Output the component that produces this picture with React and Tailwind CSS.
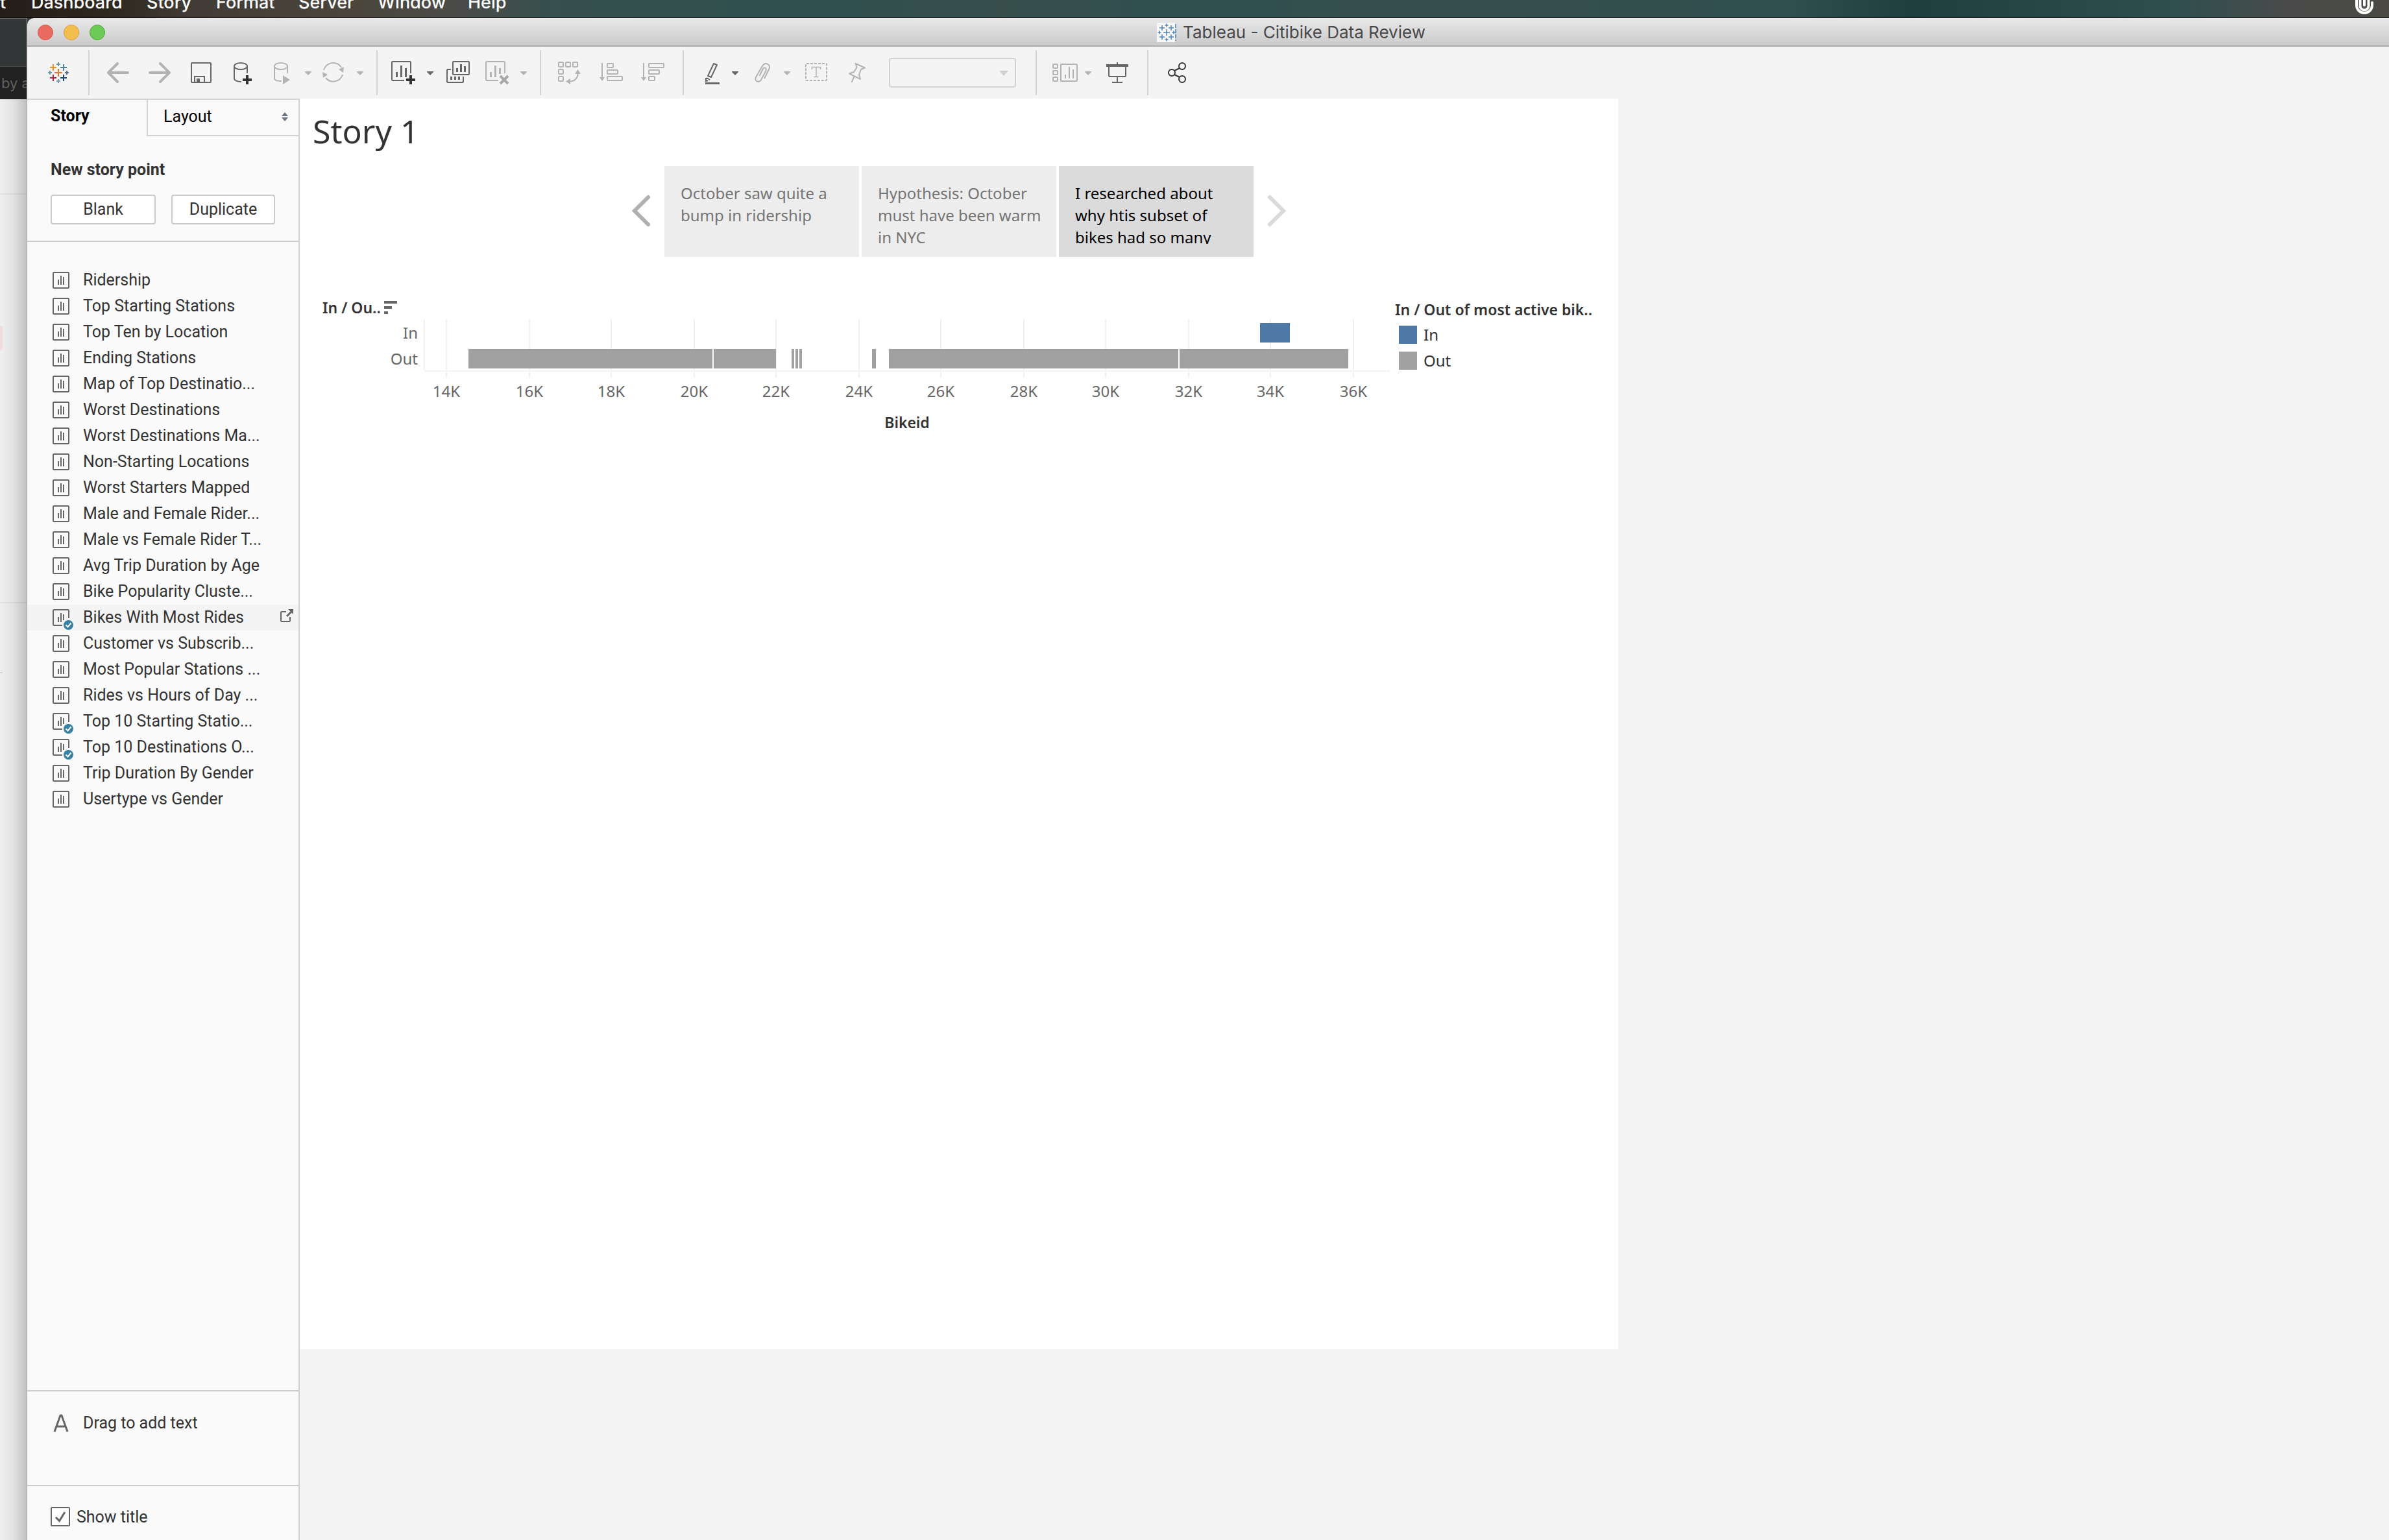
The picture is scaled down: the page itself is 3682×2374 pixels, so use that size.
import React from "react";

const menus = [
  ["Dashboard", "w-[178px]"],
  ["Story", "w-[107px]"],
  ["Format", "w-[127px]"],
  ["Server", "w-[122px]"],
  ["Window", "w-[139px]"],
  ["Help", "w-[80px]"],
];

const sheets = [
  ["Ridership"],
  ["Top Starting Stations"],
  ["Top Ten by Location"],
  ["Ending Stations"],
  ["Map of Top Destinatio..."],
  ["Worst Destinations"],
  ["Worst Destinations Ma..."],
  ["Non-Starting Locations"],
  ["Worst Starters Mapped"],
  ["Male and Female Rider..."],
  ["Male vs Female Rider T..."],
  ["Avg Trip Duration by Age"],
  ["Bike Popularity Cluste..."],
  ["Bikes With Most Rides", true, true],
  ["Customer vs Subscrib..."],
  ["Most Popular Stations ..."],
  ["Rides vs Hours of Day ..."],
  ["Top 10 Starting Statio...", true],
  ["Top 10 Destinations O...", true],
  ["Trip Duration By Gender"],
  ["Usertype vs Gender"],
];

const storyPoints = [
  { text: "October saw quite a bump in ridership" },
  { text: "Hypothesis: October must have been warm in NYC" },
  { text: "I researched about why htis subset of bikes had so many", active: true },
];

const ticks = [
  ["14K", 688], ["16K", 816], ["18K", 942], ["20K", 1070], ["22K", 1196], ["24K", 1324],
  ["26K", 1450], ["28K", 1578], ["30K", 1704], ["32K", 1832], ["34K", 1958], ["36K", 2086],
];

const outBars = [
  [722, 376], [1100, 96], [1220, 4], [1226, 4], [1232, 4], [1344, 6], [1370, 446], [1818, 260],
];

const DARK = "#666";
const LIGHT = "#b3b3b3";

/* Every toolbar drawing shares one coordinate space; x is the left edge of its window. */
function Tool({ label, x, w, className, color = DARK, children }) {
  return (
    <button type="button" aria-label={label} className={`shrink-0 ${className}`}>
      <svg width={w} height="40" viewBox={`${x} 92 ${w} 40`} fill="none" stroke={color} strokeWidth="2" className="block">
        {children}
      </svg>
    </button>
  );
}

function Caret({ label, className, color = LIGHT }) {
  return (
    <button type="button" aria-label={label} className={`shrink-0 ${className}`}>
      <svg width="10" height="40" viewBox="0 0 10 40" className="block">
        <path d="M0 18H10V19L5 24L0 19Z" fill={color} />
      </svg>
    </button>
  );
}

function Separator({ className }) {
  return <div className={`h-[70px] w-0.5 shrink-0 bg-[#d4d4d4] ${className}`} />;
}

const plus = (cx, cy, r) => `M${cx - r} ${cy}H${cx + r}M${cx} ${cy - r}V${cy + r}`;

function SheetIcon({ used }) {
  return (
    <svg width="26" height="26" viewBox="0 0 26 26" fill="none" stroke={DARK} strokeWidth="2" className="block shrink-0 overflow-visible">
      {used ? <path d="M15 25H2L1 24V2L2 1H24L25 2V14" /> : <rect x="1" y="1" width="24" height="24" rx="1" />}
      <path d="M9 12V20M13 6V20" />
      <path d={used ? "M17 8V17" : "M17 8V20"} />
      {used && (
        <>
          <circle cx="24.5" cy="24.5" r="7.5" fill="#3580a0" stroke="none" />
          <path d="M20.5 24.5L23.5 27.5L28.5 21.5" stroke="#fff" />
        </>
      )}
    </svg>
  );
}

function Toolbar() {
  return (
    <div className="flex h-20 items-center bg-[#f4f4f4]">
      <Tool label="Start page" x={74} w={32} className="ml-8">
        <path d={plus(90, 112, 6)} stroke="#e8762c" />
        <path d={plus(82, 104, 5)} stroke="#eb912b" />
        <path d={plus(98, 104, 5)} stroke="#50829a" />
        <path d={plus(82, 120, 5)} stroke="#c8203a" />
        <path d={plus(98, 120, 5)} stroke="#1f457e" />
        <path d={plus(90, 99, 3) + plus(77, 112, 3)} stroke="#7199a6" />
        <path d={plus(103, 112, 3)} stroke="#5c6692" />
        <path d={plus(90, 125, 3)} stroke="#8a94b8" />
      </Tool>
      <Separator className="ml-[30px]" />
      <Tool label="Back" x={165} w={34} className="ml-[27px]" color={LIGHT}>
        <path d="M197 112H167M181 98L167 112L181 126" strokeWidth="4" strokeLinecap="round" strokeLinejoin="round" />
      </Tool>
      <Tool label="Forward" x={229} w={34} className="ml-[30px]" color={LIGHT}>
        <path d="M231 112H261M247 98L261 112L247 126" strokeWidth="4" strokeLinecap="round" strokeLinejoin="round" />
      </Tool>
      <Tool label="Save" x={294} w={32} className="ml-[31px]">
        <rect x="295" y="97" width="30" height="30" rx="1" />
        <path d="M300 127V118H315V127" />
        <path d="M303 121H308V127H303Z" fill={DARK} stroke="none" />
      </Tool>
      <Tool label="New data source" x={358} w={32} className="ml-8">
        <ellipse cx="371" cy="102" rx="10" ry="5" />
        <path d="M361 102V121C361 124 366 126 372 126M381 102V113" />
        <path d={plus(381, 123, 7)} stroke="#333" strokeWidth="4" />
      </Tool>
      <Tool label="Pause auto updates" x={420} w={32} className="ml-[30px]" color={LIGHT}>
        <ellipse cx="433" cy="102" rx="10" ry="5" />
        <path d="M423 102V121C423 124 428 125 434 125M443 102V113" />
        <path d="M436 116L447 123L436 130Z" fill={LIGHT} stroke="none" />
      </Tool>
      <Caret label="Auto update options" className="ml-[18px]" />
      <Tool label="Run update" x={496} w={36} className="ml-4" color={LIGHT}>
        <path d="M499 108A15 15 0 0 1 526 104M528 115A15 15 0 0 1 502 120" />
        <path d="M530 103L529 112L522 107ZM497 111L505 115L498 120Z" fill={LIGHT} stroke="none" />
      </Tool>
      <Caret label="Update options" className="ml-[18px]" />
      <Separator className="ml-5" />
      <Tool label="New worksheet" x={602} w={40} className="ml-5">
        <path d="M623 124H605L604 123V96L605 95H632L633 96V113" />
        <path d="M611.5 111V119M618.5 101V119M625.5 105V119" strokeWidth="3" />
        <path d={plus(633, 123, 7)} stroke="#333" strokeWidth="4" />
      </Tool>
      <Caret label="New worksheet options" className="ml-4" color={DARK} />
      <Tool label="Duplicate" x={686} w={40} className="ml-[18px]">
        <rect x="698" y="95" width="25" height="20" rx="1" />
        <path d="M695 107H690L689 108V126L690 127H713L714 126V118" />
        <path d="M704.5 105V111M710.5 99V111M716.5 102V111M695.5 118V123M701.5 118V123M707.5 118V123" strokeWidth="3" />
      </Tool>
      <Tool label="Clear sheet" x={746} w={40} className="ml-5" color={LIGHT}>
        <path d="M768 124H750L749 123V96L750 95H777L778 96V113" />
        <path d="M756.5 111V119M763.5 101V119M770.5 105V114" strokeWidth="3" />
        <path d="M771 117L783 129M783 117L771 129" strokeWidth="4" stroke="#a8a8a8" />
      </Tool>
      <Caret label="Clear options" className="ml-4" />
      <Separator className="ml-5" />
      <Tool label="Swap rows and columns" x={858} w={40} className="ml-6" color={LIGHT}>
        <rect x="861" y="96" width="7" height="7" rx="1" />
        <rect x="872" y="96" width="7" height="7" rx="1" />
        <rect x="883" y="96" width="7" height="7" rx="1" />
        <rect x="861" y="107" width="7" height="7" rx="1" />
        <rect x="861" y="118" width="7" height="7" rx="1" />
        <path d="M878 125.500C886 125 891 120 890.500 113" />
        <path d="M890.500 107L886 114H895ZM872 125.500L879 121V130Z" fill={LIGHT} stroke="none" />
      </Tool>
      <Tool label="Sort ascending" x={922} w={40} className="ml-6" color={LIGHT}>
        <path d="M928 97V120" />
        <path d="M924 119H932L928 125Z" fill={LIGHT} stroke="none" />
        <rect x="936" y="98" width="9" height="6" rx="1" />
        <rect x="936" y="108" width="16" height="6" rx="1" />
        <rect x="936" y="118" width="23" height="6" rx="1" />
      </Tool>
      <Tool label="Sort descending" x={986} w={40} className="ml-6" color={LIGHT}>
        <path d="M992 97V120" />
        <path d="M988 119H996L992 125Z" fill={LIGHT} stroke="none" />
        <rect x="1000" y="98" width="23" height="6" rx="1" />
        <rect x="1000" y="108" width="16" height="6" rx="1" />
        <rect x="1000" y="118" width="9" height="6" rx="1" />
      </Tool>
      <Separator className="ml-[26px]" />
      <Tool label="Highlight" x={1084} w={28} className="ml-[30px]">
        <path d="M1100 98L1105 100L1096 119L1091 117Z" strokeLinejoin="round" />
        <path d="M1089 120L1094 123M1088 123L1091 125M1088 120V126" />
        <path d="M1087 128.500H1109" strokeWidth="3" />
      </Tool>
      <Caret label="Highlight options" className="ml-4" color={DARK} />
      <Tool label="Group members" x={1162} w={28} className="ml-6" color={LIGHT}>
        <path d="M1178 121L1185.500 106C1188 99 1179 95 1175.500 101L1165 119C1162 126 1170 128 1173 123L1180.500 109C1182 104 1177 103 1175.500 107L1170.500 117" />
      </Tool>
      <Caret label="Group options" className="ml-[18px]" />
      <Tool label="Show mark labels" x={1240} w={36} className="ml-[22px]" color={LIGHT}>
        <rect x="1242" y="98" width="32" height="26" rx="1" strokeDasharray="4 2" />
        <path d="M1251.500 107V103.500H1264.500V107M1258 104V118M1254.500 118.500H1261.500" strokeWidth="1.500" />
      </Tool>
      <Tool label="Fix axes" x={1306} w={30} className="ml-[30px]" color={LIGHT}>
        <path d="M1318.500 98L1333 104.500L1327 107L1324 115L1326 122L1309 113.500L1316 111L1320.500 104ZM1316.500 118L1312.500 127" strokeLinejoin="round" />
      </Tool>
      <div className="relative ml-[34px] shrink-0">
        <select aria-label="Fit" defaultValue="" className="block h-[46px] w-[196px] appearance-none rounded-sm border-2 border-[#d2d2d2] bg-[#f4f4f4]">
          <option value=""></option>
        </select>
        <svg width="14" height="8" viewBox="0 0 14 8" className="pointer-events-none absolute top-5 right-3">
          <path d="M0 0H14L7 8Z" fill="#d0d0d0" />
        </svg>
      </div>
      <Separator className="ml-[30px]" />
      <Tool label="Show or hide cards" x={1620} w={42} className="ml-[22px]" color={LIGHT}>
        <rect x="1623" y="99" width="7" height="6" rx="1" />
        <rect x="1623" y="109" width="7" height="6" rx="1" />
        <rect x="1623" y="119" width="7" height="6" rx="1" />
        <rect x="1635" y="99" width="25" height="26" rx="1" />
        <path d="M1642 115V121M1648 103V121M1654 107V121" />
      </Tool>
      <Caret label="Card options" className="ml-2.5" />
      <Tool label="Presentation mode" x={1704} w={36} className="ml-[22px]">
        <path d="M1705 99H1739V103H1705Z" fill={DARK} stroke="none" />
        <path d="M1722 96V99M1709 103V117L1710 118H1734L1735 117V103M1722 118V127M1714 127H1730" />
      </Tool>
      <Separator className="ml-7" />
      <Tool label="Share" x={1798} w={32} className="ml-7" color="#333">
        <circle cx="1822" cy="102" r="5" />
        <circle cx="1806" cy="112" r="5" />
        <circle cx="1822" cy="122" r="5" />
        <path d="M1810 109L1818 105M1810 115L1818 119" />
      </Tool>
    </div>
  );
}

function Sidebar() {
  return (
    <aside className="flex w-[420px] shrink-0 flex-col border-t-2 border-r-2 border-[#d2d2d2] bg-[#fafafa] font-['Roboto',sans-serif] text-[25px] leading-[30px] text-[#333]">
      <div role="tablist" className="flex h-14 text-black">
        <button type="button" role="tab" aria-selected="true" className="w-[184px] pb-1.5 pl-9 text-left font-bold">
          Story
        </button>
        <button type="button" role="tab" aria-selected="false" className="flex flex-1 items-center justify-between border-b-2 border-l-2 border-[#d2d2d2] pr-4 pb-0.5 pl-6 text-left">
          Layout
          <svg width="10" height="14" viewBox="0 0 10 14" fill="#687484">
            <path d="M5 0L10 6H0ZM5 14L10 8H0Z" />
          </svg>
        </button>
      </div>
      <section className="border-b-2 border-[#ccc] px-9 pt-[37px] pb-[25px]">
        <h2 className="font-bold">New story point</h2>
        <div className="mt-[23px] flex gap-6">
          <button type="button" className="h-[46px] w-[162px] rounded-sm border-2 border-[#ccc] bg-white">Blank</button>
          <button type="button" className="h-[46px] w-[160px] rounded-sm border-2 border-[#ccc] bg-white">Duplicate</button>
        </div>
      </section>
      <ul className="flex-1 pt-[39px]">
        {sheets.map(([name, used, hovered]) => (
          <li key={name} className={`flex h-10 items-center pr-2 pl-[39px] ${hovered ? "bg-[#f4f4f4]" : ""}`}>
            <SheetIcon used={used} />
            <span className="ml-[21px] flex-1 whitespace-nowrap">{name}</span>
            {hovered && (
              <button type="button" aria-label="Go to sheet">
                <svg width="20" height="26" viewBox="432 939 20 26" fill="none" stroke={DARK} strokeWidth="2" className="block">
                  <path d="M441 943H434L433 944V957L434 958H446L447 957V951" />
                  <path d="M442 950L449 943" strokeWidth="3" />
                  <path d="M444 939H452V947Z" fill={DARK} stroke="none" />
                </svg>
              </button>
            )}
          </li>
        ))}
      </ul>
      <div className="flex h-[146px] items-start border-t-2 border-[#ccc] pt-[34px] pl-[39px]">
        <svg width="26" height="30" viewBox="0 0 26 30" fill="none" stroke={DARK} strokeWidth="3" className="shrink-0">
          <path d="M3 28L12 3H14L23 28M6 20H20" />
        </svg>
        <span className="ml-[21px]">Drag to add text</span>
      </div>
      <div className="h-[85px] border-t-2 border-[#ccc] pt-[31px] pl-9">
        <label className="flex w-fit items-center gap-2.5">
          <span className="relative block size-[30px]">
            <input type="checkbox" defaultChecked className="block size-[30px] appearance-none rounded-xs border-2 border-[#666] bg-white" />
            <svg width="30" height="30" viewBox="0 0 30 30" className="pointer-events-none absolute inset-0" fill="none" stroke={DARK} strokeWidth="3">
              <path d="M8 16L13.500 21.500L22 8" />
            </svg>
          </span>
          <span className="pt-0.5">Show title</span>
        </label>
      </div>
    </aside>
  );
}

function Chart() {
  return (
    <svg viewBox="486 452 1656 230" width="1656" height="230" className="block shrink-0" role="img" aria-label="Bike ids by In / Out" fontSize="24" fill="#666">
      <text x="497" y="483" fill="#333" fontWeight="600" fontSize="23">In / Ou..</text>
      <path d="M592 464h20v4h-20zM592 472h12v4h-12zM592 480h6v4h-6z" />
      <text x="644" y="522" textAnchor="end">In</text>
      <text x="644" y="562" textAnchor="end">Out</text>
      <path d="M654 492V571" stroke="#f3f3f3" strokeWidth="2" />
      {ticks.map(([label, x]) => (
        <g key={label}>
          <path d={`M${x} 492V571M${x} 574V582`} stroke="#f0f0f0" strokeWidth="2" />
          <text x={x} y="612" textAnchor="middle">{label}</text>
        </g>
      ))}
      <path d="M654 572H2142" stroke="#f3f3f3" strokeWidth="2" />
      <rect x="1942" y="498" width="46" height="30" fill="#4e79a7" />
      {outBars.map(([x, w]) => (
        <rect key={x} x={x} y="538" width={w} height="30" fill="#a0a0a0" />
      ))}
      <text x="1398" y="660" textAnchor="middle" fill="#333" fontWeight="600" fontSize="23">Bikeid</text>
    </svg>
  );
}

function StoryCanvas() {
  return (
    <main className="min-h-[1928px] w-full max-w-[2032px] self-start bg-white pl-6 font-['Noto_Sans','Open_Sans',sans-serif] text-[24px] leading-[34px]">
      <h1 className="-ml-1 pt-[18px] text-[50px] leading-[64px] text-[#333]">Story 1</h1>
      <nav aria-label="Story points" className="mt-[22px] -ml-6 flex items-center justify-center gap-5">
        <button type="button" aria-label="Previous story point">
          <svg width="30" height="52" viewBox="0 0 30 52" fill="none" stroke="#b0b0b0" strokeWidth="6" strokeLinecap="round" className="block">
            <path d="M25 4L4 25L25 46" />
          </svg>
        </button>
        <div className="flex gap-1">
          {storyPoints.map((p) => (
            <button
              type="button"
              key={p.text}
              className={`h-[140px] w-[300px] pr-5 pt-[25px] pb-5 pl-[25px] text-left ${p.active ? "bg-[#dbdbdb] text-black" : "bg-[#ededed] text-[#757575]"}`}
            >
              <span className="block h-[95px] overflow-hidden">{p.text}</span>
            </button>
          ))}
        </div>
        <button type="button" aria-label="Next story point">
          <svg width="30" height="52" viewBox="0 0 30 52" fill="none" stroke="#dadada" strokeWidth="6" strokeLinecap="round" className="block">
            <path d="M5 4L26 25L5 46" />
          </svg>
        </button>
      </nav>
      <div className="mt-14 flex">
        <Chart />
        <div className="ml-2 pt-2 text-[#333]">
          <h2 className="text-[23px] font-semibold whitespace-nowrap">In / Out of most active bik..</h2>
          <ul className="pt-0.5 pl-1.5">
            <li className="flex h-10 items-center gap-2.5"><span className="h-7 w-7 bg-[#4e79a7]" />In</li>
            <li className="flex h-10 items-center gap-2.5"><span className="h-7 w-7 bg-[#a0a0a0]" />Out</li>
          </ul>
        </div>
      </div>
    </main>
  );
}

export default function App() {
  return (
    <div className="flex min-h-screen flex-col overflow-hidden bg-[#333636]">
      <header className="flex h-7 items-end justify-between overflow-hidden border-b border-black bg-[linear-gradient(to_right,#241d18_0%,#2e2a1f_5%,#423c36_8%,#4a463c_15%,#4b4b49_19%,#36504d_23%,#2f4f4e_34%,#384f4c_42%,#2f4f50_50%,#374f4c_60%,#2f4e4e_75%,#1f3f3f_80%,#2f4f4e_91%,#4a4b4a_96%,#4b4944_100%)]">
        <nav className="flex pb-[9px] font-['Inter',sans-serif] text-[27px] leading-7 font-medium text-white">
          <span className="w-12">t</span>
          {menus.map(([m, w]) => (
            <a href="#" key={m} className={w}>{m}</a>
          ))}
        </nav>
        <svg width="28" height="24" viewBox="0 0 28 24" fill="none" stroke="#fff" strokeLinecap="round" className="mr-6 block self-start">
          <path d="M2 -4V8A12 12 0 0 0 26 8V4" strokeWidth="4" />
          <path d="M7.500 -4V9A6.500 6.500 0 0 0 20.500 9V-4" strokeWidth="4" />
          <path d="M14 -4V8" strokeWidth="4" />
        </svg>
      </header>
      <div className="flex flex-1">
        <div className="flex w-[42px] shrink-0 flex-col overflow-hidden border-r border-[#a5a5a5]">
          <div className="h-[75px] border-t border-b border-t-[#666] border-b-[#4a4a4a] bg-[#333636]" />
          <div className="flex h-[50px] items-center bg-[#212121] pl-0.5 font-['Inter',sans-serif] text-[22px] whitespace-nowrap text-[#606060]">by a</div>
          <div className="flex flex-1 flex-col bg-[linear-gradient(to_right,#f0f0f0_0%,#e2e2e2_50%,#c2c2c2_100%)]">
            <div className="h-[147px] border-b-2 border-black/5" />
            <div className="h-[202px]" />
            <div className="h-[38px] w-1 rounded-r-full bg-[#eedcdc]" />
            <div className="h-[390px] border-b-2 border-black/5" />
            <div className="h-[108px] w-1 border-b-2 border-black/10" />
          </div>
        </div>
        <div className="flex min-w-0 flex-1 flex-col">
          <div className="flex h-11 items-center rounded-tl-[10px] border-b-2 border-[#adadad] bg-linear-to-b from-[#e8e8e8] to-[#cbcbcb]">
            <div className="flex gap-4 pt-0.5 pl-4">
              <button type="button" aria-label="Close" className="size-6 rounded-full border border-[#d6554c] bg-[#e96a5f]" />
              <button type="button" aria-label="Minimize" className="size-6 rounded-full border border-[#d9a03c] bg-[#f3be4f]" />
              <button type="button" aria-label="Zoom" className="size-6 rounded-full border border-[#4fa63c] bg-[#6bca55]" />
            </div>
            <div className="flex flex-1 items-center justify-center gap-2.5 pt-0.5 pl-[136px] font-['Inter',sans-serif] text-[26px] leading-8 text-[#484848]">
              <svg width="30" height="30" viewBox="0 0 30 30" fill="none" stroke="#4f86b8" strokeWidth="1.500">
                <path d="M0 0H28V30H0Z" fill="#f7f7f7" stroke="none" />
                <path d={plus(15, 15, 5) + plus(8, 8, 4) + plus(22, 8, 4) + plus(8, 22, 4) + plus(22, 22, 4)} />
                <path d={plus(15, 4, 2.5) + plus(15, 26, 2.5) + plus(4, 15, 2.5) + plus(26, 15, 2.5)} />
                <path d="M29 2V28" strokeDasharray="6 2" />
              </svg>
              Tableau - Citibike Data Review
            </div>
          </div>
          <Toolbar />
          <div className="flex flex-1 bg-[#f4f4f4]">
            <Sidebar />
            <StoryCanvas />
          </div>
        </div>
      </div>
    </div>
  );
}
